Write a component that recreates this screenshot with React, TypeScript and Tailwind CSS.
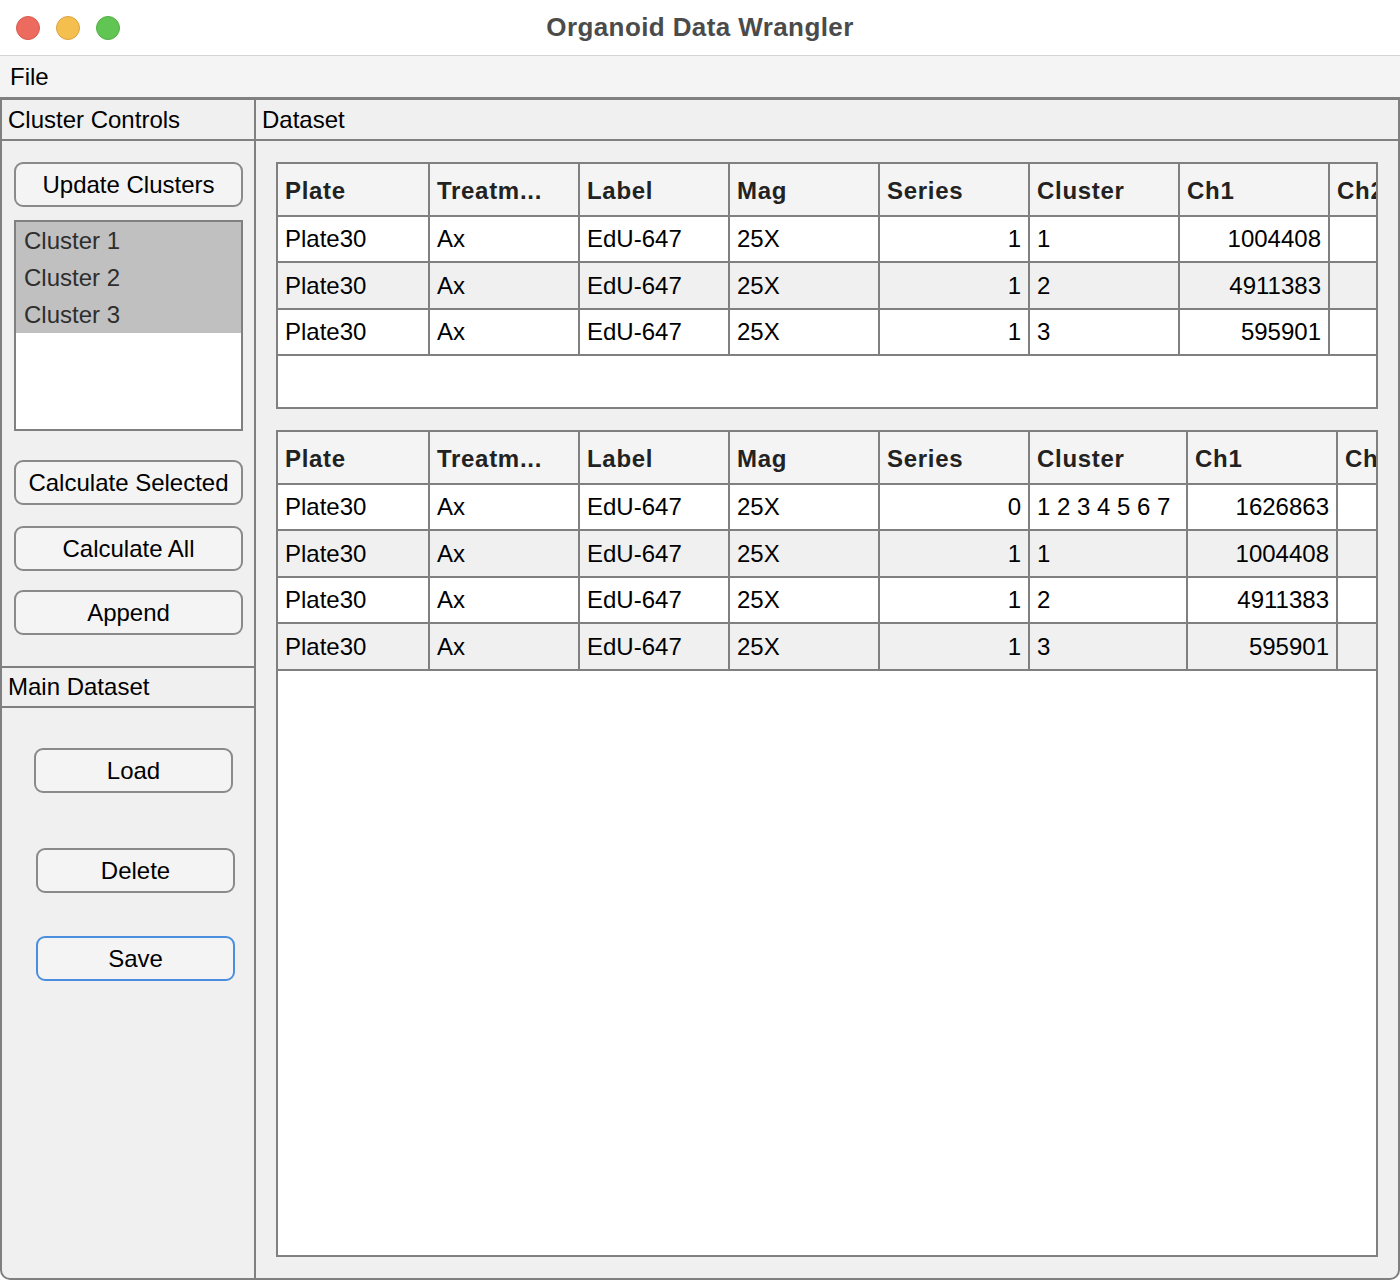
import React from 'react';

const font = { fontFamily: '"Liberation Sans", Arial, sans-serif' };

type Row = string[];

const headers = ['Plate', 'Treatm...', 'Label', 'Mag', 'Series', 'Cluster', 'Ch1', 'Ch2'];
const rows1: Row[] = [
  ['Plate30', 'Ax', 'EdU-647', '25X', '1', '1', '1004408', ''],
  ['Plate30', 'Ax', 'EdU-647', '25X', '1', '2', '4911383', ''],
  ['Plate30', 'Ax', 'EdU-647', '25X', '1', '3', '595901', ''],
];
const rows2: Row[] = [
  ['Plate30', 'Ax', 'EdU-647', '25X', '0', '1 2 3 4 5 6 7', '1626863', ''],
  ['Plate30', 'Ax', 'EdU-647', '25X', '1', '1', '1004408', ''],
  ['Plate30', 'Ax', 'EdU-647', '25X', '1', '2', '4911383', ''],
  ['Plate30', 'Ax', 'EdU-647', '25X', '1', '3', '595901', ''],
];

// right-aligned numeric columns
const numeric = [false, false, false, false, true, false, true, true];

function DataTable({ rows, widths, height }: { rows: Row[]; widths: string[]; height: string }) {
  return (
    <div className={`${height} border-2 border-[#808080] bg-white overflow-hidden`}>
      <div className="w-[1400px]">
        {/* header */}
        <div className="flex h-[53px] bg-[#f4f4f4] border-b-2 border-[#808080]">
          {headers.map((h, i) => (
            <div
              key={i}
              className={`${widths[i]} shrink-0 border-r-2 border-[#808080] flex items-center pt-[2px] px-[7px] font-bold text-[24px] tracking-[0.7px] text-[#222] whitespace-nowrap`}
            >
              {h}
            </div>
          ))}
        </div>
        {rows.map((r, ri) => (
          <div
            key={ri}
            className={`flex border-b-2 border-[#808080] ${ri % 2 === 1 ? 'h-[47px] bg-[#f0f0f0]' : 'h-[46px] bg-white'}`}
          >
            {r.map((c, ci) => (
              <div
                key={ci}
                className={`${widths[ci]} shrink-0 border-r-2 border-[#808080] flex items-center px-[7px] text-[24px] text-black whitespace-nowrap ${numeric[ci] ? 'justify-end' : ''}`}
              >
                {c}
              </div>
            ))}
          </div>
        ))}
      </div>
    </div>
  );
}

function Btn({ label, className = '', blue = false }: { label: string; className?: string; blue?: boolean }) {
  return (
    <button
      className={`h-[45px] rounded-[9px] border-2 ${blue ? 'border-[#4a8ee0]' : 'border-[#8a8a8a]'} bg-[#f4f4f4] text-[24px] text-black ${className}`}
    >
      {label}
    </button>
  );
}

export default function App() {
  const w1 = ['w-[152px]', 'w-[150px]', 'w-[150px]', 'w-[150px]', 'w-[150px]', 'w-[150px]', 'w-[150px]', 'w-[150px]'];
  const w2 = ['w-[152px]', 'w-[150px]', 'w-[150px]', 'w-[150px]', 'w-[150px]', 'w-[158px]', 'w-[150px]', 'w-[150px]'];

  return (
    <div className="w-[1400px] h-[1280px] bg-white flex flex-col overflow-hidden" style={font}>
      {/* Title bar */}
      <div className="h-[56px] shrink-0 border-b border-[#d4d4d4] grid grid-cols-[1fr_auto_1fr] items-center">
        <div className="flex items-center gap-[16px] pl-[16px]">
          <span className="w-[24px] h-[24px] rounded-full bg-[#ec6a5e] border border-[#d65a4f]" />
          <span className="w-[24px] h-[24px] rounded-full bg-[#f4bf4f] border border-[#d9a53c]" />
          <span className="w-[24px] h-[24px] rounded-full bg-[#61c554] border border-[#52ad46]" />
        </div>
        <div className="text-[26px] font-bold tracking-[0.4px] text-[#4b4b4b]">Organoid Data Wrangler</div>
        <div />
      </div>

      {/* Menu bar */}
      <div className="h-[41px] shrink-0 bg-[#f4f4f4] flex items-center px-[10px] text-[24px] text-black">File</div>

      {/* Main window body */}
      <div className="flex-1 flex bg-[#f0f0f0] border-t-[3px] border-x-2 border-b-2 border-[#808080] rounded-b-[10px] overflow-hidden">
        {/* Left panel */}
        <div className="w-[254px] shrink-0 border-r-2 border-[#808080] flex flex-col">
          <div className="h-[41px] border-b-2 border-[#808080] flex items-center px-[6px] text-[24px] text-black">
            Cluster Controls
          </div>
          <div className="flex flex-col pl-[12px] pt-[21px]">
            <Btn label="Update Clusters" className="w-[229px]" />
            <div className="mt-[13px] w-[229px] h-[211px] border-2 border-[#808080] bg-white">
              {['Cluster 1', 'Cluster 2', 'Cluster 3'].map((c) => (
                <div key={c} className="h-[37px] bg-[#c0c0c0] flex items-center px-[8px] text-[24px] text-[#2e2e2e]">
                  {c}
                </div>
              ))}
            </div>
            <Btn label="Calculate Selected" className="w-[229px] mt-[29px]" />
            <Btn label="Calculate All" className="w-[229px] mt-[21px]" />
            <Btn label="Append" className="w-[229px] mt-[19px]" />
          </div>
          <div className="mt-[31px] h-[42px] border-y-2 border-[#808080] flex items-center px-[6px] text-[24px] text-black">
            Main Dataset
          </div>
          <div className="flex flex-col">
            <Btn label="Load" className="w-[199px] ml-[32px] mt-[40px]" />
            <Btn label="Delete" className="w-[199px] ml-[34px] mt-[55px]" />
            <Btn label="Save" className="w-[199px] ml-[34px] mt-[43px]" blue />
          </div>
        </div>

        {/* Right panel */}
        <div className="flex-1 flex flex-col min-w-0">
          <div className="h-[41px] shrink-0 border-b-2 border-[#808080] flex items-center px-[6px] text-[24px] text-black">
            Dataset
          </div>
          <div className="flex-1 flex flex-col px-[20px] pt-[21px] pb-[21px] gap-[21px] min-h-0">
            <DataTable rows={rows1} widths={w1} height="h-[247px] shrink-0" />
            <DataTable rows={rows2} widths={w2} height="flex-1" />
          </div>
        </div>
      </div>
    </div>
  );
}
